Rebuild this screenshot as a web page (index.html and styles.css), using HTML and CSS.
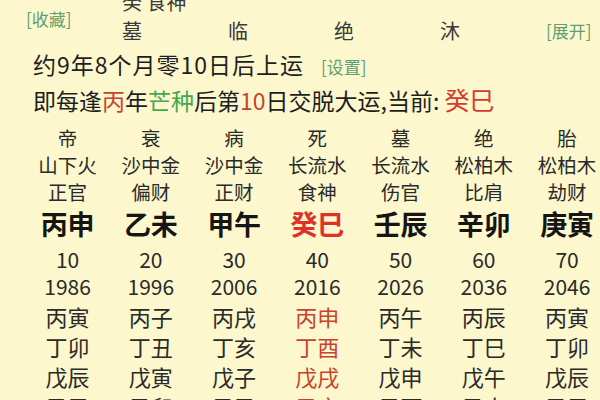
FILE: index.html
```html
<html>
	<head>
		<link rel="stylesheet" href="styles.css">
	</head>
	<body>
	<div class="head">
		<div class="fav">[收藏]</div>
		<div class="hbody">
			<div class="hline">癸 食神</div>
			<div class="hgrid">
				<div>墓</div>
				<div>临</div>
				<div>绝</div>
				<div>沐</div>
			</div>
		</div>
		<div class="expand">[展开]</div>
	</div>

	<div class="info first"><span class="spaced">约9年8个月零10日后上运</span><span class="setBtn">[设置]</span></div>
	<div class="info">即每逢<span class="red">丙</span>年<span class="green">芒种</span>后第<span class="red">10</span>日交脱大运,当前: <span class="curLuck">癸巳</span></div>

	<div class="luck">
		<div class="row small">
			<div>帝</div><div>衰</div><div>病</div><div>死</div><div>墓</div><div>绝</div><div>胎</div>
		</div>
		<div class="row small">
			<div>山下火</div><div>沙中金</div><div>沙中金</div><div>长流水</div><div>长流水</div><div>松柏木</div><div>松柏木</div>
		</div>
		<div class="row small">
			<div>正官</div><div>偏财</div><div>正财</div><div>食神</div><div>伤官</div><div>比肩</div><div>劫财</div>
		</div>
		<div class="row pillar">
			<div>丙申</div><div>乙未</div><div>甲午</div><div class="now">癸巳</div><div>壬辰</div><div>辛卯</div><div>庚寅</div>
		</div>
		<div class="row num age">
			<div>10</div><div>20</div><div>30</div><div>40</div><div>50</div><div>60</div><div>70</div>
		</div>
		<div class="row num">
			<div>1986</div><div>1996</div><div>2006</div><div>2016</div><div>2026</div><div>2036</div><div>2046</div>
		</div>
		<div class="row year first">
			<div>丙寅</div><div>丙子</div><div>丙戌</div><div class="hot">丙申</div><div>丙午</div><div>丙辰</div><div>丙寅</div>
		</div>
		<div class="row year">
			<div>丁卯</div><div>丁丑</div><div>丁亥</div><div class="hot">丁酉</div><div>丁未</div><div>丁巳</div><div>丁卯</div>
		</div>
		<div class="row year">
			<div>戊辰</div><div>戊寅</div><div>戊子</div><div class="hot">戊戌</div><div>戊申</div><div>戊午</div><div>戊辰</div>
		</div>
		<div class="row year">
			<div>己巳</div><div>己卯</div><div>己丑</div><div class="hot">己亥</div><div>己酉</div><div>己未</div><div>己巳</div>
		</div>
	</div>
	</body>
</html>
```

FILE: styles.css
```css
body {
	margin: 0;
	background: #fcf7cd;
	color: #222;
	font-family: "Noto Sans CJK SC", "Noto Sans", sans-serif;
	overflow: hidden;
	width: 600px;
	height: 400px;
}

/* top header: fav link, two text lines, expand link */
.head {
	display: flex;
	padding-left: 26px;
	padding-right: 10px;
	margin-top: -11px;
	white-space: nowrap;
}

.fav {
	width: 96px;
	flex-shrink: 0;
	align-self: center;
	font-size: 17px;
	color: #5e9f73;
}

.hbody {
	font-size: 20px;
	color: #3a3a3a;
}

.hline {
	line-height: 26px;
}

.hgrid {
	display: grid;
	grid-template-columns: repeat(4, 106px);
	line-height: 32px;
}

.expand {
	margin-left: auto;
	flex-shrink: 0;
	align-self: flex-end;
	font-size: 17px;
	line-height: 32px;
	color: #5e9f73;
}

.info {
	padding-left: 33px;
	font-size: 23px;
	line-height: 32px;
	color: #1e1e1e;
	white-space: nowrap;
}

.info.first {
	margin-top: 1px;
}

.spaced {
	letter-spacing: 1px;
}

.setBtn {
	margin-left: 17px;
	font-size: 17px;
	color: #5e9f73;
}

.red {
	color: #c8432f;
}

.green {
	color: #43a84c;
}

.curLuck {
	font-size: 25px;
	color: #d8392c;
}

/* luck pillars */
.luck {
	margin-top: 8px;
	padding-left: 26px;
}

.row {
	display: grid;
	grid-template-columns: repeat(7, 83.25px);
	text-align: center;
	white-space: nowrap;
}

.row.small {
	font-size: 19.5px;
	line-height: 27px;
	color: #2a2a2a;
}

.row.pillar {
	margin-top: 2px;
	font-size: 27px;
	font-weight: bold;
	line-height: 34px;
	color: #151515;
}

.pillar .now {
	color: #e0302a;
}

.row.num {
	font-size: 21px;
	line-height: 27px;
	color: #2a2a2a;
}

.row.age {
	margin-top: 5px;
}

.row.year {
	font-size: 22px;
	line-height: 30px;
	color: #2a2a2a;
}

.row.year.first {
	margin-top: 0.5px;
}

.year .hot {
	color: #c8432f;
}
```
